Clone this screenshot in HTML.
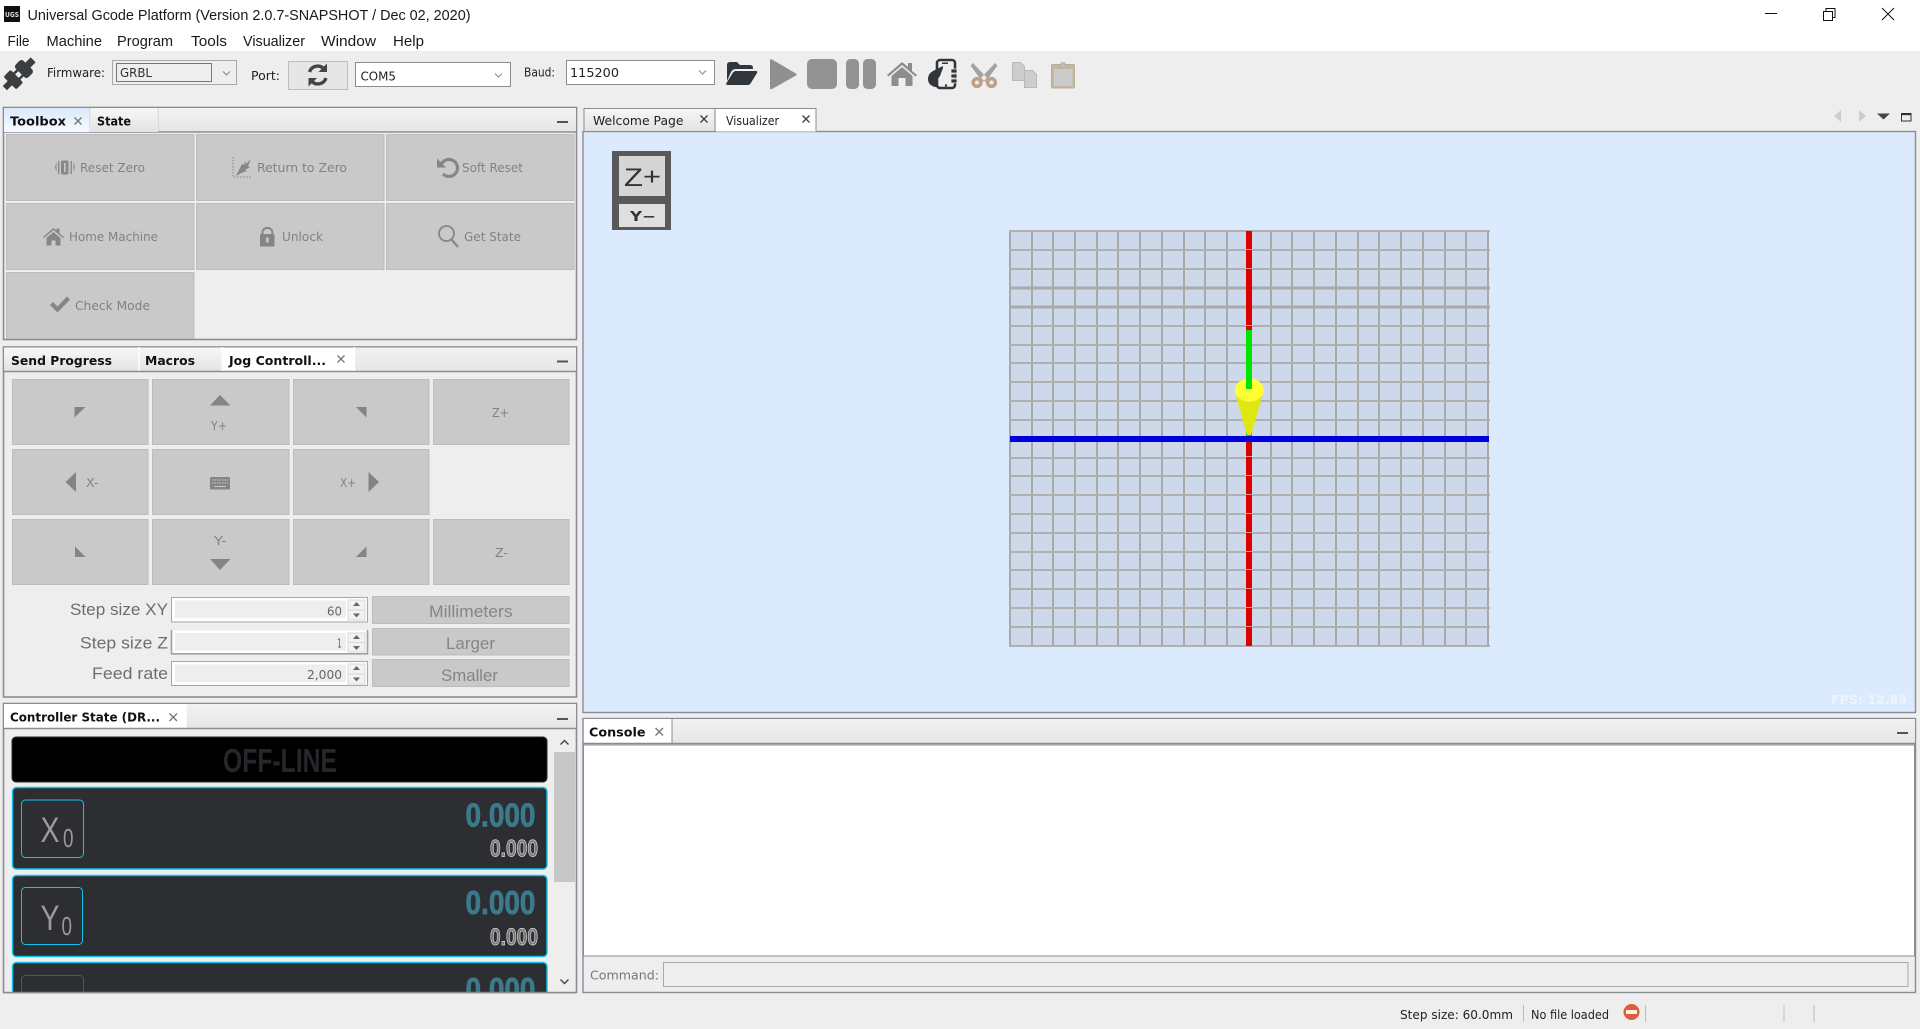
<!DOCTYPE html>
<html lang="en"><head><meta charset="utf-8"><title>Universal Gcode Platform</title>
<style>
html,body{margin:0;padding:0;background:#eee;width:1920px;height:1029px;overflow:hidden}
svg{display:block}
text{font-family:"DejaVu Sans","Liberation Sans",sans-serif;font-size:12px;fill:#222;white-space:pre}
.s{font-family:"Liberation Sans",sans-serif;font-size:15px;fill:#1a1a1a}
.b{font-weight:bold;fill:#111}
.d{fill:#828282}
.l{font-family:"Liberation Sans",sans-serif;font-size:17px;fill:#6e6e6e}
.g{font-family:"Liberation Sans",sans-serif;font-size:17px;fill:#858585}
.x{stroke:#777;stroke-width:1.4;fill:none}
.btn{fill:#c9c9c9;stroke:#bcbcbc;stroke-width:1}
.pan{fill:#eee;stroke:#8a8c95;stroke-width:1.6}
.big{font-family:"Liberation Sans",sans-serif;font-weight:bold;font-size:33px;fill:#3b7a8b;stroke:#3b7a8b;stroke-width:.8}
.sm{font-family:"Liberation Sans",sans-serif;font-weight:bold;font-size:24px;fill:#777;stroke:#dedede;stroke-width:.7}
.ax{font-family:"Liberation Sans",sans-serif;fill:#9b9b9b}
</style></head><body>
<svg xmlns="http://www.w3.org/2000/svg" width="1920" height="1029" viewBox="0 0 1920 1029">
<defs>
<linearGradient id="gt" x1="0" y1="0" x2="0" y2="1"><stop offset="0" stop-color="#f7f7f7"/><stop offset="1" stop-color="#e3e3e3"/></linearGradient>
<linearGradient id="gs" x1="0" y1="0" x2="0" y2="1"><stop offset="0" stop-color="#f2f2f2"/><stop offset=".5" stop-color="#ececec"/><stop offset="1" stop-color="#e6e6e6"/></linearGradient>
<linearGradient id="gb" x1="0" y1="0" x2="0" y2="1"><stop offset="0" stop-color="#dbe9fb"/><stop offset="1" stop-color="#f6faff"/></linearGradient>
</defs>
<rect width="1920" height="1029" fill="#eeeeee"/>

<!-- title bar + menu -->
<rect width="1920" height="51" fill="#fff"/>
<rect x="4" y="6" width="16" height="16" fill="#111"/>
<text x="5" y="17" textLength="14" lengthAdjust="spacingAndGlyphs" style="font-size:7px;font-weight:bold;fill:#ddd">UGS</text>
<text class="s" x="27.500" y="20" textLength="443" lengthAdjust="spacingAndGlyphs">Universal Gcode Platform (Version 2.0.7-SNAPSHOT / Dec 02, 2020)</text>
<path d="M1765 13.500H1777" stroke="#111" stroke-width="1"/>
<path d="M1823.500 11.500h9v9h-9zM1826 11.500v-3h9v9h-2.500" fill="none" stroke="#111" stroke-width="1"/>
<path d="M1882 8L1894 20M1894 8L1882 20" stroke="#111" stroke-width="1"/>
<text class="s" x="7.500" y="46" textLength="22" lengthAdjust="spacingAndGlyphs">File</text>
<text class="s" x="46.500" y="46" textLength="55.500" lengthAdjust="spacingAndGlyphs">Machine</text>
<text class="s" x="117" y="46" textLength="56" lengthAdjust="spacingAndGlyphs">Program</text>
<text class="s" x="191" y="46" textLength="36" lengthAdjust="spacingAndGlyphs">Tools</text>
<text class="s" x="243" y="46" textLength="62" lengthAdjust="spacingAndGlyphs">Visualizer</text>
<text class="s" x="321" y="46" textLength="55" lengthAdjust="spacingAndGlyphs">Window</text>
<text class="s" x="393" y="46" textLength="31" lengthAdjust="spacingAndGlyphs">Help</text>

<!-- toolbar -->
<g transform="translate(19,74) rotate(-45)" fill="#3a3d42">
<rect x="-20" y="-3" width="8" height="6"/>
<rect x="-13" y="-9" width="10" height="18" rx="2"/>
<rect x="1.500" y="-9" width="11" height="18" rx="3"/>
<rect x="-4" y="-5" width="6" height="2.500"/>
<rect x="-4" y="2.500" width="6" height="2.500"/>
<rect x="12" y="-3.500" width="8" height="7"/>
</g>
<text x="47" y="77" textLength="58" lengthAdjust="spacingAndGlyphs">Firmware:</text>
<rect x="112.500" y="60.500" width="124" height="24" fill="#eeeeee" stroke="#a8a8a8"/>
<rect x="116.500" y="63.500" width="95" height="18" fill="#eeeeee" stroke="#000" stroke-dasharray="1 1"/>
<text x="120" y="77" textLength="32" lengthAdjust="spacingAndGlyphs" style="fill:#333">GRBL</text>
<path d="M223 71.500l3.500 3.500l3.500-3.500" fill="none" stroke="#888"/>
<text x="251" y="80" textLength="29" lengthAdjust="spacingAndGlyphs">Port:</text>
<rect x="288.500" y="61.500" width="59" height="28" fill="#e6e6e6" stroke="#bdbdbd"/>
<g fill="none" stroke="#444" stroke-width="3.400">
<path d="M309.500 72a8.500 8.500 0 0 1 14.500-3"/><path d="M326 78a8.500 8.500 0 0 1-14.500 3"/>
</g>
<path d="M327 63.500v8.500h-8.500zM308.500 86.500v-8.500h8.500z" fill="#444"/>
<rect x="355.500" y="62.500" width="155" height="24" fill="#fff" stroke="#8c8c8c"/>
<text x="360.500" y="80.500" textLength="35.500" lengthAdjust="spacingAndGlyphs">COM5</text>
<path d="M495 73.500l3.500 3.500l3.500-3.500" fill="none" stroke="#888"/>
<text x="524" y="76.500" textLength="31" lengthAdjust="spacingAndGlyphs">Baud:</text>
<rect x="566.500" y="60.500" width="148" height="24" fill="#fff" stroke="#8c8c8c"/>
<text x="570" y="77" textLength="49" lengthAdjust="spacingAndGlyphs">115200</text>
<path d="M699 70.500l3.500 3.500l3.500-3.500" fill="none" stroke="#888"/>

<!-- toolbar icons -->
<path d="M727 65q0-3 3-3h7l3 3h10q3 0 3 3v1h-17q-3.500 0-5 3l-4 9z" fill="#31363d"/>
<path d="M733 72.500q1-1.500 3-1.500h20q2 0 1 2l-6.500 10.500q-1 1.500-3 1.500h-20q-2 0-1-2z" fill="#31363d"/>
<path d="M770 60.500q0-2 2-1l24 14q1.500 1 0 2l-24 13.500q-2 1-2-1z" fill="#8f8f8f"/>
<rect x="807" y="59" width="30" height="30" rx="5" fill="#939393"/>
<rect x="846" y="59" width="13" height="30" rx="4.500" fill="#939393"/>
<rect x="863" y="59" width="13" height="30" rx="4.500" fill="#939393"/>
<path d="M887 75l15-13l6 5v-4h4v8l5 4-1.500 1.500l-13.500-11.500l-13.500 11.500z" fill="#8d8d8d"/>
<path d="M891.500 76l10.500-9l10.500 9v10h-7v-8h-7v8h-7z" fill="#8d8d8d"/>
<rect x="937" y="60" width="18" height="28" rx="3" fill="#eee" stroke="#32363c" stroke-width="2.600"/>
<rect x="942" y="62.500" width="6" height="1.500" fill="#32363c"/>
<circle cx="946" cy="85.500" r="1.200" fill="#32363c"/>
<path d="M943 66l-8 4q-7 3-7 9q0 6 7 8h2v-7l3-4l3-8z" fill="#32363c"/>
<path d="M951 69h6v4h-6zM951 74h6v4h-6zM951 79h6v4h-6z" fill="#32363c" stroke="#eee" stroke-width=".8"/>
<path d="M970.500 65.500l2.500-2.500l14 15l-4.500 4zM997.500 65.500l-2.500-2.500l-14 15l4.500 4z" fill="#a3a3a3"/>
<circle cx="977" cy="82.500" r="3.800" fill="none" stroke="#bfa284" stroke-width="3.600"/>
<circle cx="991.500" cy="82.500" r="3.800" fill="none" stroke="#bfa284" stroke-width="3.600"/>
<path d="M1012.500 62.500h8l4 4v14h-12z" fill="#cdcdcd" stroke="#b8b8b8"/>
<path d="M1024.500 70.500h8l4 4v13h-12z" fill="#cdcdcd" stroke="#b8b8b8"/>
<rect x="1051.500" y="64.500" width="23" height="23.500" rx="1" fill="#c2b99f" stroke="#b7b09a"/>
<rect x="1054" y="69" width="18.500" height="17" fill="#cbcbcb"/>
<path d="M1058 68v-2.500h3v-3h4v3h3v2.500z" fill="#bdbdbd" stroke="#a5a5a5" stroke-width=".6"/>

<!-- toolbox panel -->
<rect class="pan" x="3.500" y="107.500" width="573" height="232"/>
<rect x="4" y="108" width="572" height="24" fill="url(#gs)"/>
<path d="M4 132H576" stroke="#8a8c95" stroke-width="1.600"/>
<rect x="4" y="108" width="86" height="24" fill="url(#gb)"/>
<rect x="91" y="108" width="66" height="24" fill="url(#gt)"/>
<path d="M90.500 108V132M157.500 108V132" stroke="#fff" stroke-width="1"/>
<path d="M90 108V132M158 108V132" stroke="#b6b8be" stroke-width=".6"/>
<text class="b" x="10" y="125.500" textLength="56" lengthAdjust="spacingAndGlyphs">Toolbox</text>
<path class="x" d="M74.500 117.500l7 7M81.500 117.500l-7 7"/>
<text class="b" x="97" y="125.500" textLength="34" lengthAdjust="spacingAndGlyphs">State</text>
<rect x="557" y="121" width="11" height="2" fill="#555"/>

<rect class="btn" x="6.500" y="134.500" width="187.500" height="66"/>
<rect class="btn" x="196.500" y="134.500" width="187.500" height="66"/>
<rect class="btn" x="386.500" y="134.500" width="187.500" height="66"/>
<rect class="btn" x="6.500" y="203.500" width="187.500" height="66"/>
<rect class="btn" x="196.500" y="203.500" width="187.500" height="66"/>
<rect class="btn" x="386.500" y="203.500" width="187.500" height="66"/>
<rect class="btn" x="6.500" y="272.500" width="187.500" height="66"/>

<text class="d" x="80" y="172" textLength="65" lengthAdjust="spacingAndGlyphs">Reset Zero</text>
<text class="d" x="257" y="172" textLength="90" lengthAdjust="spacingAndGlyphs">Return to Zero</text>
<text class="d" x="462" y="172" textLength="61" lengthAdjust="spacingAndGlyphs">Soft Reset</text>
<text class="d" x="69" y="241" textLength="89" lengthAdjust="spacingAndGlyphs">Home Machine</text>
<text class="d" x="282" y="241" textLength="41" lengthAdjust="spacingAndGlyphs">Unlock</text>
<text class="d" x="464" y="241" textLength="57" lengthAdjust="spacingAndGlyphs">Get State</text>
<text class="d" x="75" y="310" textLength="75" lengthAdjust="spacingAndGlyphs">Check Mode</text>

<!-- toolbox icons -->
<path d="M55 167l1.500-5v10zM75 167l-1.500-5v10z" fill="#888"/>
<path d="M58 161h1.500v13h-1.500zM70.500 161h1.500v13h-1.500z" fill="#8d8d8d"/>
<rect x="61" y="160.500" width="7.500" height="14" rx="1.500" fill="#888"/>
<rect x="64" y="163" width="1.600" height="9" fill="#c9c9c9"/>
<path d="M233 157v20h19" fill="none" stroke="#888" stroke-dasharray="1.500 1.500"/>
<path d="M236 176l6-12l2 1l1-4 1 3l5-5l-3 7l2 1l-5 3 2 1l-6 2z" fill="#868686"/>
<path d="M441 165a8.500 8.500 0 1 1 2 9" fill="none" stroke="#868686" stroke-width="3.200"/>
<path d="M437 158.500v9h9z" fill="#868686"/>
<path d="M43 237l10.500-9l3 2.500v-2h3v5l4.500 3.500-1 1-9.500-8-9.500 8z" fill="#868686"/>
<path d="M46.500 238l7-6 7 6v7.500h-5v-5h-4v5h-5z" fill="#868686"/>
<rect x="260" y="234" width="14.500" height="12.500" rx="1" fill="#858585"/>
<path d="M262.500 234v-2.500a5 4.500 0 0 1 9.800 0V234" fill="none" stroke="#858585" stroke-width="2"/>
<rect x="266" y="237.500" width="2.600" height="5" fill="#c9c9c9"/>
<circle cx="446.500" cy="233.500" r="7.500" fill="none" stroke="#858585" stroke-width="1.800"/>
<path d="M451.500 239.500l6.500 7.500" stroke="#858585" stroke-width="2.200"/>
<path d="M50 305l3-3l4.500 4.500l9.500-10l3 3l-12.500 13z" fill="#858585"/>

<!-- jog panel -->
<rect class="pan" x="3.500" y="347" width="573" height="350"/>
<rect x="4" y="347.500" width="572" height="24" fill="url(#gs)"/>
<rect x="4" y="347.500" width="134.500" height="24" fill="url(#gt)"/>
<rect x="140" y="347.500" width="81.500" height="24" fill="url(#gt)"/>
<rect x="223" y="347.500" width="131.500" height="24" fill="#fff"/>
<path d="M4 371.500H576" stroke="#8a8c95" stroke-width="1.600"/>
<path d="M139 347V371M222 347V371M354.500 347V371" stroke="#fff" stroke-width="1.400"/>
<text class="b" x="11" y="365" textLength="101" lengthAdjust="spacingAndGlyphs">Send Progress</text>
<text class="b" x="145" y="365" textLength="50" lengthAdjust="spacingAndGlyphs">Macros</text>
<text x="229" y="365" textLength="97" lengthAdjust="spacingAndGlyphs" style="font-weight:bold;fill:#111">Jog Controll...</text>
<path class="x" d="M337.500 355.500l7 7M344.500 355.500l-7 7"/>
<rect x="557" y="360.500" width="11" height="2" fill="#555"/>

<rect class="btn" x="12.500" y="379.500" width="135.500" height="65"/>
<rect class="btn" x="152.500" y="379.500" width="136.500" height="65"/>
<rect class="btn" x="293.500" y="379.500" width="135.500" height="65"/>
<rect class="btn" x="433.500" y="379.500" width="135.500" height="65"/>
<rect class="btn" x="12.500" y="449.500" width="135.500" height="65"/>
<rect class="btn" x="152.500" y="449.500" width="136.500" height="65"/>
<rect class="btn" x="293.500" y="449.500" width="135.500" height="65"/>
<rect class="btn" x="12.500" y="519.500" width="135.500" height="65"/>
<rect class="btn" x="152.500" y="519.500" width="136.500" height="65"/>
<rect class="btn" x="293.500" y="519.500" width="135.500" height="65"/>
<rect class="btn" x="433.500" y="519.500" width="135.500" height="65"/>
<g fill="#848484">
<path d="M74.500 407H85.500L74.500 417.500zM210 405.500L220 395L230.500 405.500zM356 407H366.500V417.500z"/>
<path d="M76 472V492L65.500 482zM368.500 472V492L379 482z"/>
<path d="M75 546.500L85.500 557H75zM210 559H230.500L220 570zM366.500 546.500V557H356z"/>
</g>
<rect x="210" y="477" width="20" height="12.500" rx="1" fill="#858585"/>
<path d="M212 480h16M212 483h16" stroke="#c9c9c9" stroke-dasharray="1.500 1" stroke-width="1"/>
<path d="M214 486.500h12" stroke="#c9c9c9"/>
<text class="d" x="211" y="430" textLength="16" lengthAdjust="spacingAndGlyphs">Y+</text>
<text class="d" x="492" y="417" textLength="17" lengthAdjust="spacingAndGlyphs">Z+</text>
<text class="d" x="86" y="487" textLength="12.600" lengthAdjust="spacingAndGlyphs">X-</text>
<text class="d" x="340" y="487" textLength="16" lengthAdjust="spacingAndGlyphs">X+</text>
<text class="d" x="214" y="545" textLength="12.600" lengthAdjust="spacingAndGlyphs">Y-</text>
<text class="d" x="495" y="557" textLength="13" lengthAdjust="spacingAndGlyphs">Z-</text>

<text class="l" x="70" y="615" textLength="98" lengthAdjust="spacingAndGlyphs">Step size XY</text>
<text class="l" x="80" y="648.500" textLength="88" lengthAdjust="spacingAndGlyphs">Step size Z</text>
<text class="l" x="92" y="679" textLength="76" lengthAdjust="spacingAndGlyphs">Feed rate</text>

<rect x="171.500" y="597.500" width="196" height="24.500" fill="#fff" stroke="#a6a6a6"/>
<rect x="175" y="600.500" width="171" height="17.500" fill="#eee"/>
<rect x="348" y="600" width="17" height="20" fill="#f2f2f2" stroke="#d8d8d8"/>
<path d="M348 610H365" stroke="#d8d8d8"/>
<path d="M353 606l3.500-4l3.500 4zM353 613.500l3.500 4l3.500-4z" fill="#666"/>
<rect x="171.500" y="630.500" width="196" height="23" fill="#fff"/>
<path d="M171.500 630V653.800H367.500V630" fill="none" stroke="#a0a0a0" stroke-width="1.600"/>
<rect x="175" y="633" width="171" height="17.500" fill="#eee"/>
<rect x="348" y="633" width="17" height="19" fill="#f2f2f2" stroke="#d8d8d8"/>
<path d="M348 642.500H365" stroke="#d8d8d8"/>
<path d="M353 639l3.500-4l3.500 4zM353 646l3.500 4l3.500-4z" fill="#666"/>
<rect x="171.500" y="661.500" width="196" height="24" fill="#fff" stroke="#a6a6a6"/>
<rect x="175" y="664.500" width="171" height="17.500" fill="#eee"/>
<rect x="348" y="664" width="17" height="20" fill="#f2f2f2" stroke="#d8d8d8"/>
<path d="M348 674H365" stroke="#d8d8d8"/>
<path d="M353 670l3.500-4l3.500 4zM353 677.500l3.500 4l3.500-4z" fill="#666"/>
<text x="327" y="615.500" textLength="15" lengthAdjust="spacingAndGlyphs" style="fill:#666">60</text>
<text x="337" y="647.500" textLength="5" lengthAdjust="spacingAndGlyphs" style="fill:#666">1</text>
<text x="307" y="679" textLength="35" lengthAdjust="spacingAndGlyphs" style="fill:#666">2,000</text>
<rect class="btn" x="372.500" y="596.500" width="196.500" height="27"/>
<rect class="btn" x="372.500" y="628.500" width="196.500" height="26.500"/>
<rect class="btn" x="372.500" y="659.500" width="196.500" height="27"/>
<text class="g" x="429" y="617" textLength="83.600" lengthAdjust="spacingAndGlyphs">Millimeters</text>
<text class="g" x="446" y="649" textLength="49" lengthAdjust="spacingAndGlyphs">Larger</text>
<text class="g" x="441" y="681" textLength="57" lengthAdjust="spacingAndGlyphs">Smaller</text>

<!-- controller panel -->
<rect class="pan" x="3.500" y="703.500" width="573" height="289"/>
<rect x="4" y="704" width="572" height="24" fill="url(#gs)"/>
<rect x="4" y="704" width="181.500" height="24" fill="#fff"/>
<path d="M186 704V728" stroke="#fff" stroke-width="1.400"/>
<path d="M4 728.500H576" stroke="#8a8c95" stroke-width="1.600"/>
<text x="10" y="721.500" textLength="150" lengthAdjust="spacingAndGlyphs" style="font-weight:bold;fill:#111">Controller State (DR...</text>
<path class="x" d="M169.500 713.500l7.500 7.500M177 713.500l-7.500 7.500"/>
<rect x="557" y="718" width="11" height="2" fill="#555"/>
<rect x="4.500" y="730" width="571" height="262" fill="#eee"/>
<rect x="554" y="752" width="21" height="130" fill="#c7c7c7"/>
<path d="M560.500 744.500l4-4l4 4M560.500 979.500l4 4l4-4" fill="none" stroke="#444" stroke-width="1.400"/>

<rect x="12" y="737" width="535" height="45" rx="4" fill="#000" stroke="#2b2b2b"/>
<text x="223" y="772" textLength="114" lengthAdjust="spacingAndGlyphs" style="font-family:'Liberation Sans',sans-serif;font-weight:bold;font-size:33px;fill:#25272a">OFF-LINE</text>

<rect x="12.500" y="787.500" width="534.500" height="81.500" rx="4" fill="#2c2e31" stroke="#0cc4ee" stroke-width="1.400"/>
<rect x="21.500" y="800" width="62" height="57.500" rx="4" fill="none" stroke="#0cc4ee" stroke-width="1"/>
<text class="ax" x="40.500" y="842" textLength="19" lengthAdjust="spacingAndGlyphs" style="font-size:35px">X</text>
<text class="ax" x="63" y="847" textLength="10.500" lengthAdjust="spacingAndGlyphs" style="font-size:26px">0</text>
<text class="big" x="465.500" y="826.500" textLength="70" lengthAdjust="spacingAndGlyphs">0.000</text>
<text class="sm" x="490" y="856.500" textLength="48" lengthAdjust="spacingAndGlyphs">0.000</text>

<rect x="12.500" y="875.500" width="534.500" height="81" rx="4" fill="#2c2e31" stroke="#0cc4ee" stroke-width="1.400"/>
<rect x="21.500" y="887.500" width="61" height="57" rx="4" fill="none" stroke="#0cc4ee" stroke-width="1"/>
<text class="ax" x="40.500" y="930" textLength="19" lengthAdjust="spacingAndGlyphs" style="font-size:35px">Y</text>
<text class="ax" x="61.500" y="935" textLength="10.500" lengthAdjust="spacingAndGlyphs" style="font-size:26px">0</text>
<text class="big" x="465.500" y="914" textLength="70" lengthAdjust="spacingAndGlyphs">0.000</text>
<text class="sm" x="490" y="945" textLength="48" lengthAdjust="spacingAndGlyphs">0.000</text>

<clipPath id="zc"><rect x="4" y="955" width="550" height="37"/></clipPath>
<g clip-path="url(#zc)">
<rect x="12.500" y="962.500" width="534.500" height="81" rx="4" fill="#2c2e31" stroke="#0cc4ee" stroke-width="1.400"/>
<rect x="21.500" y="975.500" width="62" height="57" rx="4" fill="none" stroke="#1a6b80" stroke-width="1"/>
<text class="big" x="465.500" y="1001" textLength="70" lengthAdjust="spacingAndGlyphs">0.000</text>
</g>
<path d="M3.500 992.500H576.500" stroke="#8a8c95" stroke-width="1.600"/>

<!-- visualizer -->
<rect x="583" y="131.500" width="1332.500" height="581" fill="#dceafe" stroke="#8a8c95" stroke-width="1.400"/>
<rect x="584" y="108" width="130" height="23" fill="url(#gt)"/>
<rect x="716" y="108" width="100" height="23.500" fill="#fff"/>
<path d="M584 131V108.500H816V131M715 108.500V131" fill="none" stroke="#8a8c95" stroke-width="1"/>
<text x="593" y="125" textLength="90.500" lengthAdjust="spacingAndGlyphs">Welcome Page</text>
<path class="x" d="M700.500 115.500l7 7M707.500 115.500l-7 7" style="stroke:#444"/>
<text x="726" y="125" textLength="53" lengthAdjust="spacingAndGlyphs">Visualizer</text>
<path class="x" d="M802.500 115.500l7 7M809.500 115.500l-7 7" style="stroke:#444"/>
<path d="M1841 110V122L1834 116zM1859 110V122L1866 116z" fill="#cdcdcd"/>
<path d="M1877 113.500H1890L1883.500 119.500z" fill="#444"/>
<rect x="1901.500" y="113.500" width="9.500" height="7.500" fill="#eee" stroke="#333"/>
<path d="M1901.500 114.500h9.500" stroke="#333" stroke-width="1.400"/>

<rect x="612" y="151" width="59" height="79" fill="#595959"/>
<rect x="619" y="156" width="46" height="40" fill="#d5d5d5"/>
<rect x="619" y="204" width="46" height="23" fill="#dfdfdf"/>
<text x="624" y="186" textLength="19" lengthAdjust="spacingAndGlyphs" style="font-family:'Liberation Sans',sans-serif;font-size:25px;fill:#333">Z</text>
<text x="643" y="184.500" textLength="18" lengthAdjust="spacingAndGlyphs" style="font-family:'Liberation Sans',sans-serif;font-size:24px;fill:#333">+</text>
<text x="630" y="221" textLength="26" lengthAdjust="spacingAndGlyphs" style="font-family:'DejaVu Sans',sans-serif;font-weight:bold;font-size:13px;fill:#333">Y−</text>

<!-- grid -->
<rect x="1010" y="231" width="479" height="415" fill="#cdd9ea"/>
<path stroke="#a9a9a9" stroke-width="2" fill="none" d="M1010 231V646M1032 231V646M1053 231V646M1075 231V646M1097 231V646M1118 231V646M1140 231V646M1162 231V646M1184 231V646M1205 231V646M1227 231V646M1271 231V646M1292 231V646M1314 231V646M1336 231V646M1358 231V646M1379 231V646M1401 231V646M1423 231V646M1445 231V646M1466 231V646M1488 231V646"/>
<path stroke="#b0b0b0" stroke-width="2" fill="none" d="M1009 231H1490M1009 250H1490M1009 269H1490M1009 326H1490M1009 345H1490M1009 363H1490M1009 382H1490M1009 401H1490M1009 420H1490M1009 458H1490M1009 476H1490M1009 495H1490M1009 514H1490M1009 533H1490M1009 552H1490M1009 570H1490M1009 589H1490M1009 608H1490M1009 627H1490M1009 646H1490"/>
<path stroke="#aaaaaa" stroke-width="3" fill="none" d="M1009 288H1490M1009 307H1490"/>
<rect x="1246" y="231" width="6" height="415" fill="#dd0000"/>
<path stroke="#e89a9a" stroke-width="1" d="M1246 249.500h6M1246 268.500h6M1246 326.500h0M1246 325.500h6M1246 456.500h6M1246 475.500h6M1246 494.500h6M1246 513.500h6M1246 532.500h6M1246 551.500h6M1246 569.500h6M1246 588.500h6M1246 607.500h6M1246 626.500h6"/>
<rect x="1246" y="330" width="6" height="60" fill="#00e600"/>
<rect x="1246" y="431" width="6" height="8" fill="#00d800"/>
<rect x="1010" y="436" width="479" height="6" fill="#0000dd"/>
<path d="M1236 396.500H1262L1256 418L1251 435H1247L1242 418z" fill="#dde812"/>
<ellipse cx="1249.300" cy="390" rx="14.500" ry="11.500" fill="#ffff33"/>
<rect x="1246" y="378" width="6" height="11" fill="#00e600"/>
<text x="1831" y="704" textLength="76" lengthAdjust="spacingAndGlyphs" style="font-weight:bold;fill:#eef4fe">FPS: 12.89</text>

<!-- console -->
<rect x="583" y="718.500" width="1332.500" height="274" fill="#eee" stroke="#8a8c95" stroke-width="1.400"/>
<rect x="584" y="719" width="1331" height="24" fill="url(#gs)"/>
<rect x="584" y="719" width="88" height="24" fill="#fff"/>
<path d="M583 743.500H1915" stroke="#8a8c95" stroke-width="1.400"/>
<path d="M672 719V743" stroke="#8a8c95" stroke-width="1"/>
<text x="589" y="736.500" textLength="56.500" lengthAdjust="spacingAndGlyphs" style="font-weight:bold;fill:#111">Console</text>
<path class="x" d="M655.500 728l7.500 7.500M663 728l-7.500 7.500"/>
<rect x="1897" y="732" width="11" height="2" fill="#555"/>
<rect x="583.500" y="745" width="1331" height="211" fill="#fff" stroke="#8a8c95" stroke-width="1"/>
<text x="590" y="979.500" textLength="69" lengthAdjust="spacingAndGlyphs" style="fill:#777">Command:</text>
<rect x="663.500" y="962.500" width="1244.500" height="24" fill="#eee" stroke="#a8a8a8"/>

<!-- status bar -->
<text x="1400" y="1019" textLength="113" lengthAdjust="spacingAndGlyphs">Step size: 60.0mm</text>
<text x="1531" y="1019" textLength="78" lengthAdjust="spacingAndGlyphs">No file loaded</text>
<path d="M1523.500 1005V1022M1645.500 1005V1022M1784 1005V1022M1814 1005V1022" stroke="#bdbdbd" stroke-width="1"/>
<circle cx="1631.500" cy="1012" r="8" fill="#d9603f"/>
<rect x="1626" y="1010" width="11" height="4" fill="#fbeee8"/>
</svg>
</body></html>
